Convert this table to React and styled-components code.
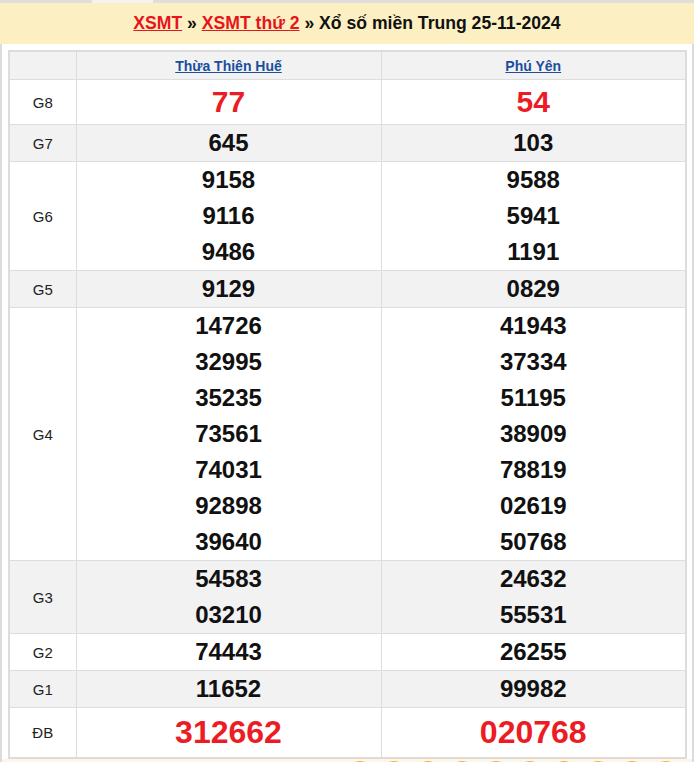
import React from "react";
import styled, { createGlobalStyle } from "styled-components";

const Global = createGlobalStyle`
  html, body { margin: 0; padding: 0; background: #fff; }
  body { font-family: "Liberation Sans", Arial, sans-serif; }
`;

const Page = styled.div`
  width: 694px;
`;

const TopStrip = styled.div`
  height: 3px;
  background: linear-gradient(to right, #dedede 0, #dedede 92px, #f3f3f3 92px, #f3f3f3 153px, #dedede 153px);
`;

const TitleBar = styled.h2`
  margin: 0;
  height: 41px;
  background: #fcf0c2;
  display: flex;
  align-items: center;
  justify-content: center;
  font-size: 17.6px;
  font-weight: bold;
  color: #111;
  white-space: pre;
`;

const RedLink = styled.a`
  color: #e8141c;
  text-decoration: underline;
`;

const Box = styled.div`
  border-left: 2px solid #dcdcdc;
  border-right: 2px solid #dcdcdc;
  padding: 6px 5px 0 6px;
`;

const Table = styled.table`
  width: 679px;
  border-collapse: collapse;
  table-layout: fixed;
  border: 2px solid #dcdcdc;
`;

const Tr = styled.tr`
  background: ${(p) => (p.$alt ? "#f2f2f2" : "#fff")};
`;

const Th = styled.th`
  border: 1px solid #dddddd;
  padding: 0;
  height: 27px;
  background: #f2f2f2;
  font-size: 14px;
  font-weight: bold;
  text-align: center;
`;

const BlueLink = styled.a`
  color: #1b4f9c;
  text-decoration: underline;
`;

const Label = styled.td`
  border: 1px solid #dddddd;
  padding: 0;
  text-align: center;
  font-size: 15px;
  color: #222;
`;

const Cell = styled.td`
  border: 1px solid #dddddd;
  padding: 0;
  text-align: center;
`;

const Num = styled.div`
  font-weight: bold;
  font-size: ${(p) => p.$size || 24}px;
  line-height: ${(p) => p.$lh || 36}px;
  color: ${(p) => (p.$red ? "#ec1c24" : "#111")};
`;

const Footer = styled.div`
  margin: 0 -5px 0 -6px;
  background: #fdf6e6;
  height: 10px;
  display: flex;
  justify-content: flex-end;
  gap: 8px;
  padding: 2px 13px 0 0;
  overflow: hidden;
`;

const Dot = styled.span`
  flex: none;
  width: 26px;
  height: 26px;
  border-radius: 50%;
  background: #f6a835;
`;

const rows = [
  { g: "G8", a: ["77"], b: ["54"], red: true, size: 30, lh: 44 },
  { g: "G7", a: ["645"], b: ["103"], alt: true },
  { g: "G6", a: ["9158", "9116", "9486"], b: ["9588", "5941", "1191"] },
  { g: "G5", a: ["9129"], b: ["0829"], alt: true },
  {
    g: "G4",
    a: ["14726", "32995", "35235", "73561", "74031", "92898", "39640"],
    b: ["41943", "37334", "51195", "38909", "78819", "02619", "50768"],
  },
  { g: "G3", a: ["54583", "03210"], b: ["24632", "55531"], alt: true },
  { g: "G2", a: ["74443"], b: ["26255"] },
  { g: "G1", a: ["11652"], b: ["99982"], alt: true },
  { g: "ĐB", a: ["312662"], b: ["020768"], red: true, size: 32, lh: 49 },
];

export default function App() {
  return (
    <Page>
      <Global />
      <TopStrip />
      <TitleBar>
        <RedLink href="#">XSMT</RedLink>
        <span> » </span>
        <RedLink href="#">XSMT thứ 2</RedLink>
        <span> » Xổ số miền Trung 25-11-2024</span>
      </TitleBar>
      <Box>
        <Table>
          <colgroup>
            <col style={{ width: "67px" }} />
            <col />
            <col />
          </colgroup>
          <thead>
            <tr>
              <Th />
              <Th>
                <BlueLink href="#">Thừa Thiên Huế</BlueLink>
              </Th>
              <Th>
                <BlueLink href="#">Phú Yên</BlueLink>
              </Th>
            </tr>
          </thead>
          <tbody>
            {rows.map((r) => (
              <Tr key={r.g} $alt={r.alt}>
                <Label>{r.g}</Label>
                {[r.a, r.b].map((list, i) => (
                  <Cell key={i}>
                    {list.map((n) => (
                      <Num key={n} $red={r.red} $size={r.size} $lh={r.lh}>
                        {n}
                      </Num>
                    ))}
                  </Cell>
                ))}
              </Tr>
            ))}
          </tbody>
        </Table>
        <Footer>
          {Array.from({ length: 10 }).map((_, i) => (
            <Dot key={i} />
          ))}
        </Footer>
      </Box>
    </Page>
  );
}
